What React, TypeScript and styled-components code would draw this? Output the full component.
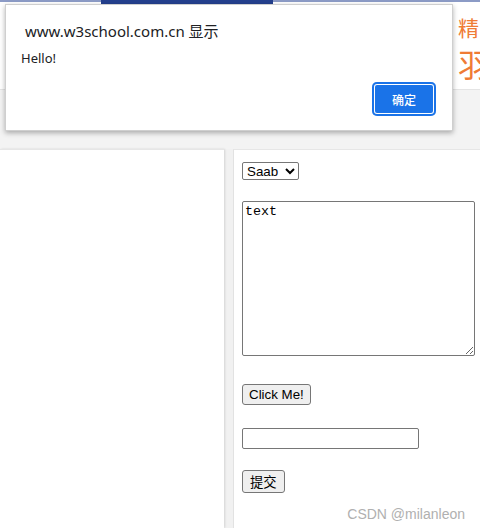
import React from "react";
import styled, { createGlobalStyle } from "styled-components";

const GlobalStyle = createGlobalStyle`
  html, body {
    margin: 0;
    padding: 0;
    background: #f3f3f3;
  }
  body {
    width: 480px;
    height: 528px;
    overflow: hidden;
    font-family: "Liberation Sans", Arial, sans-serif;
  }
`;

const App: React.FC = () => {
  return (
    <>
      <GlobalStyle />
      <Page>
        <Header>
          <TopStrip>
            <span className="active" />
          </TopStrip>
          <Slogan>
            <span className="line1">精</span>
            <span className="line2">羽</span>
          </Slogan>
        </Header>
        <Band />
        <Panels>
          <LeftPanel />
          <RightPanel>
            <Select defaultValue="saab">
              <option value="volvo">Volvo</option>
              <option value="saab">Saab</option>
              <option value="audi">Audi</option>
            </Select>
            <TextArea defaultValue="text" />
            <Button type="button">Click Me!</Button>
            <TextInput type="text" />
            <Button type="submit">提交</Button>
          </RightPanel>
        </Panels>

        <Dialog>
          <h2 className="title">www.w3school.com.cn 显示</h2>
          <p className="message">Hello!</p>
          <DialogFooter>
            <OkButton>确定</OkButton>
          </DialogFooter>
        </Dialog>

        <Watermark>CSDN @milanleon</Watermark>
      </Page>
    </>
  );
};

export default App;

const Page = styled.div`
  position: relative;
  width: 480px;
  height: 528px;
  display: flex;
  flex-direction: column;
`;

const Header = styled.header`
  height: 89px;
  background: #fff;
  border-bottom: 1px solid #e4e4e4;
  display: flex;
  flex-direction: column;
  overflow: hidden;
`;

const TopStrip = styled.div`
  height: 2px;
  background: #8c9bc6;
  padding-left: 101px;

  .active {
    display: block;
    width: 172px;
    height: 4px;
    background: #24408e;
  }
`;

const Slogan = styled.div`
  display: flex;
  flex-direction: column;
  padding: 14px 0 0 458px;
  color: #ef7b35;
  font-family: "Noto Sans CJK SC", sans-serif;
  line-height: 1;

  .line1 {
    font-size: 21px;
    line-height: 22px;
  }

  .line2 {
    margin-top: 8px;
    font-size: 32px;
    line-height: 34px;
  }
`;

const Band = styled.div`
  height: 59px;
  background: #f3f3f3;
`;

const Panels = styled.div`
  flex: 1;
  display: flex;
  gap: 9px;
  background: #f1f1f1;
`;

const LeftPanel = styled.div`
  width: 224px;
  background: #fff;
  border-top: 1px solid #e6e6e6;
  box-shadow: 1px 0 2px rgba(0, 0, 0, 0.12);
`;

const RightPanel = styled.div`
  flex: 1;
  background: #fff;
  border-top: 1px solid #e6e6e6;
  border-left: 1px solid #e2e2e2;
  padding: 12px 0 0 8px;
  display: flex;
  flex-direction: column;
  align-items: flex-start;
`;

const Select = styled.select`
  height: 18px;
  width: 57px;
  padding: 0;
  font-family: "Liberation Sans", Arial, sans-serif;
  font-size: 13.33px;
  color: #000;
  background: #fff;
  border: 1px solid #767676;
  border-radius: 2px;
`;

const TextArea = styled.textarea`
  box-sizing: border-box;
  margin-top: 21px;
  width: 233px;
  height: 155px;
  padding: 2px;
  font-family: "Liberation Mono", "Courier New", monospace;
  font-size: 13.33px;
  color: #000;
  border: 1px solid #767676;
  border-radius: 2px;
`;

const Button = styled.button`
  box-sizing: border-box;
  height: 21px;
  margin-top: 28px;
  padding: 1px 6px;
  font-family: "Liberation Sans", Arial, "Noto Sans CJK SC", sans-serif;
  font-size: 13.33px;
  color: #000;
  background: #efefef;
  border: 1px solid #767676;
  border-radius: 3px;

  &[type="submit"] {
    height: 23px;
    margin-top: 21px;
    padding: 1px 7px;
  }
`;

const TextInput = styled.input`
  box-sizing: border-box;
  margin-top: 23px;
  width: 177px;
  height: 21px;
  border: 1px solid #767676;
  border-radius: 2px;
  background: #fff;
`;

const Dialog = styled.div`
  position: absolute;
  left: 5px;
  top: 4px;
  width: 448px;
  height: 127px;
  box-sizing: border-box;
  padding: 16px 16px 0 15px;
  background: #fff;
  border: 1px solid #cfcfcf;
  box-shadow: 0 2px 5px rgba(0, 0, 0, 0.3);
  font-family: "Noto Sans", "Noto Sans CJK SC", sans-serif;
  color: #202124;

  .title {
    margin: 0 0 0 4px;
    font-size: 15px;
    font-weight: 400;
    line-height: 20px;
  }

  .message {
    margin: 8px 0 0 0;
    font-size: 13px;
    line-height: 18px;
  }
`;

const DialogFooter = styled.div`
  display: flex;
  justify-content: flex-end;
  margin-top: 15px;
`;

const OkButton = styled.button`
  width: 64px;
  height: 34px;
  background: #1a73e8;
  color: #fff;
  border: none;
  border-radius: 5px;
  box-shadow: inset 0 0 0 2px #1a73e8, inset 0 0 0 3px #fff;
  font-family: "Noto Sans CJK SC", sans-serif;
  font-size: 12px;
  font-weight: 500;
`;

const Watermark = styled.div`
  position: absolute;
  right: 15px;
  bottom: 6px;
  font-family: "Liberation Sans", Arial, sans-serif;
  font-size: 14px;
  color: #b0b0b0;
`;
